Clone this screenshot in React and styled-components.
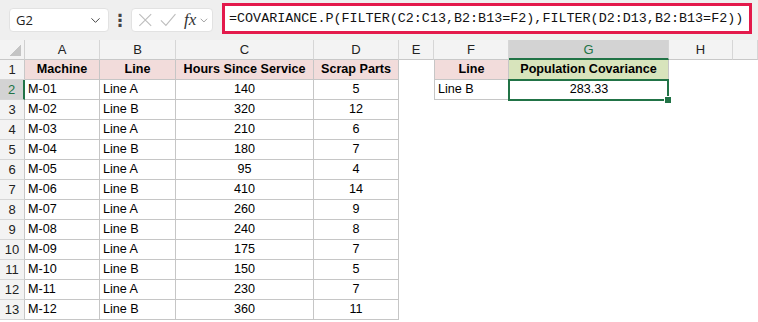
import React from 'react'
import styled, { createGlobalStyle } from 'styled-components'
import { ChevronDown } from 'lucide-react'

const rows = [
  ['M-01', 'Line A', 140, 5],
  ['M-02', 'Line B', 320, 12],
  ['M-03', 'Line A', 210, 6],
  ['M-04', 'Line B', 180, 7],
  ['M-05', 'Line A', 95, 4],
  ['M-06', 'Line B', 410, 14],
  ['M-07', 'Line A', 260, 9],
  ['M-08', 'Line B', 240, 8],
  ['M-09', 'Line A', 175, 7],
  ['M-10', 'Line B', 150, 5],
  ['M-11', 'Line A', 230, 7],
  ['M-12', 'Line B', 360, 11],
]

const letters = ['A', 'B', 'C', 'D', 'E', 'F', 'G', 'H', '']

const CancelIcon = () => (
  <svg width="16" height="16" viewBox="0 0 16 16" fill="none" stroke="#bdbdbd" strokeWidth="1.2">
    <path d="M1.5 1.5 L14.5 14.5 M14.5 1.5 L1.5 14.5" />
  </svg>
)

const EnterIcon = () => (
  <svg width="18" height="16" viewBox="0 0 18 16" fill="none" stroke="#bdbdbd" strokeWidth="1.2">
    <path d="M1 8.5 L6.5 14 L17 1.5" />
  </svg>
)

export default function App() {
  return (
    <>
      <Global />
      <Page>
        <Toolbar>
          <NameBox>
            <span>G2</span>
            <ChevronDown size={15} strokeWidth={1.6} color="#444" />
          </NameBox>
          <Dots>⋮</Dots>
          <FxBox>
            <CancelIcon />
            <EnterIcon />
            <Fx>fx</Fx>
            <ChevronDown size={13} strokeWidth={1.4} color="#777" />
          </FxBox>
          <Formula>=COVARIANCE.P(FILTER(C2:C13,B2:B13=F2),FILTER(D2:D13,B2:B13=F2))</Formula>
        </Toolbar>

        <Sheet>
          <Corner />
          {letters.map((l, i) => (
            <ColHead key={i} $active={l === 'G'}>{l}</ColHead>
          ))}

          <RowHead>1</RowHead>
          <Cell $box $bg="#f2dcdb" $bold $align="center">Machine</Cell>
          <Cell $box $bg="#f2dcdb" $bold $align="center">Line</Cell>
          <Cell $box $bg="#f2dcdb" $bold $align="center">Hours Since Service</Cell>
          <Cell $box $bg="#f2dcdb" $bold $align="center">Scrap Parts</Cell>
          <Cell />
          <Cell $box $left $bg="#f2dcdb" $bold $align="center">Line</Cell>
          <Cell $box $bg="#d8e4bc" $bold $align="center">Population Covariance</Cell>
          <Cell />
          <Cell />

          {rows.map((r, i) => (
            <React.Fragment key={r[0]}>
              <RowHead $active={i === 0}>{i + 2}</RowHead>
              <Cell $box>{r[0]}</Cell>
              <Cell $box>{r[1]}</Cell>
              <Cell $box $align="center">{r[2]}</Cell>
              <Cell $box $align="center">{r[3]}</Cell>
              <Cell />
              {i === 0 ? (
                <>
                  <Cell $box $left>Line B</Cell>
                  <Selected $align="center">283.33<Handle /></Selected>
                </>
              ) : (
                <>
                  <Cell />
                  <Cell />
                </>
              )}
              <Cell />
              <Cell />
            </React.Fragment>
          ))}
        </Sheet>
      </Page>
    </>
  )
}

const Global = createGlobalStyle`
  body {
    margin: 0;
    background: #fff;
    font-family: "Liberation Sans", Arial, sans-serif;
  }
`

const Page = styled.div`
  width: 758px;
  height: 322px;
  overflow: hidden;
  background: #fff;
`

const Toolbar = styled.div`
  height: 40px;
  background: #efefef;
  display: flex;
  align-items: center;
  padding-left: 9px;
  box-sizing: border-box;
`

const NameBox = styled.div`
  width: 100px;
  height: 24px;
  box-sizing: border-box;
  background: #fff;
  border: 1px solid #e2e2e2;
  border-radius: 4px;
  display: flex;
  align-items: center;
  justify-content: space-between;
  padding: 0 5px 0 6px;
  font-family: "Open Sans", "Noto Sans", sans-serif;
  font-size: 13px;
  color: #222;
`

const Dots = styled.div`
  width: 22px;
  text-align: center;
  font-size: 17px;
  font-weight: bold;
  color: #444;
  font-family: "DejaVu Sans", sans-serif;
`

const FxBox = styled.div`
  width: 82px;
  height: 24px;
  box-sizing: border-box;
  background: #fff;
  border: 1px solid #e2e2e2;
  border-radius: 4px;
  display: flex;
  align-items: center;
  gap: 7px;
  padding: 0 2px 0 6px;
`

const Fx = styled.span`
  font-family: "Liberation Serif", "DejaVu Serif", serif;
  font-style: italic;
  font-size: 17px;
  color: #333;
  margin-left: 1px;
  margin-right: -5px;
`

const Formula = styled.div`
  margin-left: 9px;
  width: 530px;
  height: 31px;
  margin-top: -3px;
  box-sizing: border-box;
  border: 3px solid #e3194b;
  background: #fff;
  display: flex;
  align-items: center;
  padding-left: 4px;
  font-family: "Liberation Mono", "DejaVu Sans Mono", monospace;
  font-size: 13.4px;
  color: #111;
  white-space: nowrap;
`

const Sheet = styled.div`
  display: grid;
  grid-template-columns: 25px 75px 76px 138px 85px 35px 75px 160px 64px 1fr;
  grid-auto-rows: 20px;
  font-size: 12.6px;
  color: #000;
`

const Corner = styled.div`
  background: #f3f3f3;
  border-right: 1px solid #d0d0d0;
  border-bottom: 1px solid #c8c8c8;
  position: relative;
  &::after {
    content: '';
    position: absolute;
    right: 3px;
    bottom: 3px;
    width: 11px;
    height: 11px;
    background: linear-gradient(135deg, transparent 50%, #c4c4c4 50%);
  }
`

const ColHead = styled.div`
  background: ${p => (p.$active ? '#d3d3d3' : '#f3f3f3')};
  color: ${p => (p.$active ? '#217346' : '#222')};
  border-right: 1px solid #d6d6d6;
  border-bottom: ${p => (p.$active ? '2px solid #217346' : '1px solid #c8c8c8')};
  box-sizing: border-box;
  display: flex;
  align-items: center;
  justify-content: center;
  font-size: 13px;
`

const RowHead = styled.div`
  background: ${p => (p.$active ? '#d3d3d3' : '#f3f3f3')};
  color: ${p => (p.$active ? '#217346' : '#222')};
  border-right: ${p => (p.$active ? '2px solid #217346' : '1px solid #c8c8c8')};
  border-bottom: 1px solid #d6d6d6;
  box-sizing: border-box;
  display: flex;
  align-items: center;
  justify-content: center;
  font-size: 13px;
`

const Cell = styled.div`
  box-sizing: border-box;
  background: ${p => p.$bg || '#fff'};
  border-right: ${p => (p.$box ? '1px solid #c6c6c6' : 'none')};
  border-bottom: ${p => (p.$box ? '1px solid #c6c6c6' : 'none')};
  border-left: ${p => (p.$left ? '1px solid #c6c6c6' : 'none')};
  font-weight: ${p => (p.$bold ? 700 : 400)};
  text-align: ${p => p.$align || 'left'};
  padding: 0 3px;
  line-height: 19px;
  white-space: nowrap;
  overflow: hidden;
`

const Selected = styled(Cell)`
  position: relative;
  overflow: visible;
  border: none;
  &::after {
    content: '';
    position: absolute;
    left: -1px;
    top: -1px;
    right: 0;
    bottom: -1px;
    border: 2px solid #217346;
    pointer-events: none;
  }
`

const Handle = styled.span`
  position: absolute;
  right: -3px;
  bottom: -4px;
  width: 6px;
  height: 6px;
  background: #217346;
  border: 1px solid #fff;
  z-index: 1;
`
